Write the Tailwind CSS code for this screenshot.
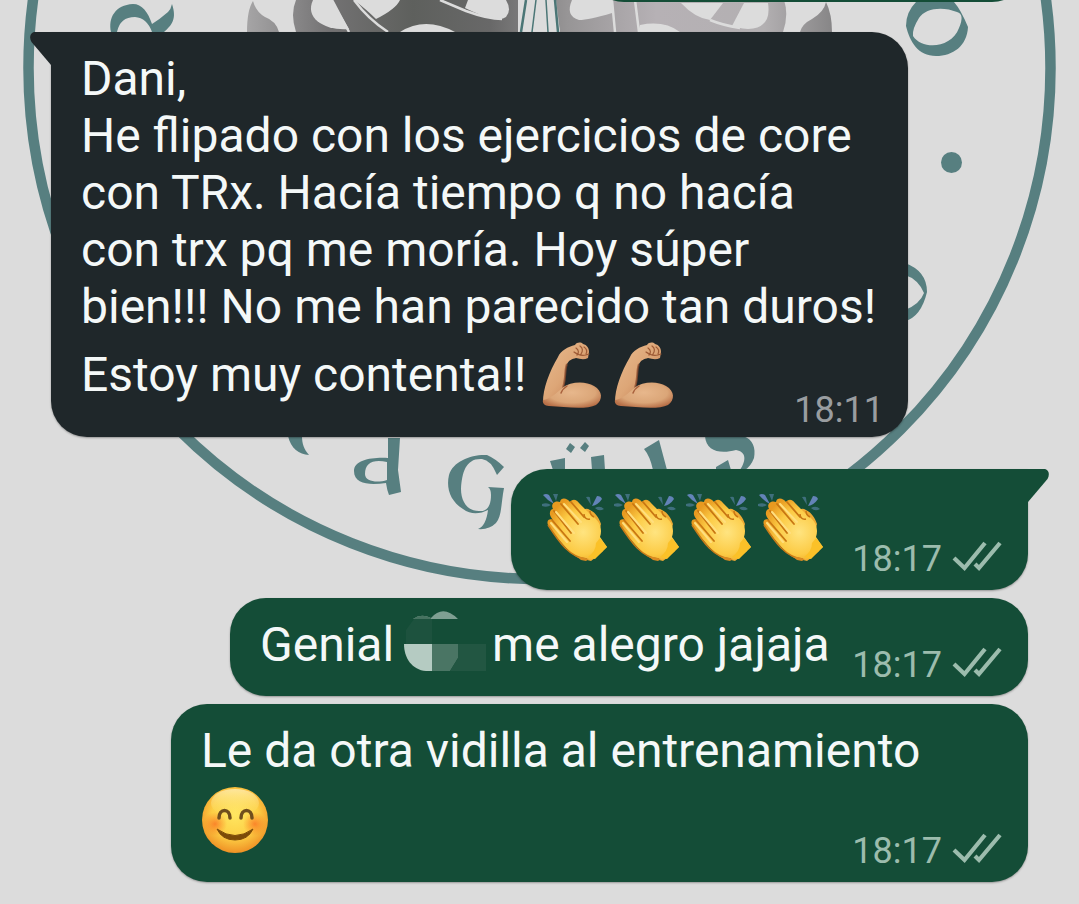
<!DOCTYPE html>
<html lang="es">
<head>
<meta charset="utf-8">
<meta name="viewport" content="width=device-width, initial-scale=1">
<title>Chat</title>
<script src="https://cdn.jsdelivr.net/npm/@tailwindcss/browser@4"></script>
</head>
<body class="relative min-h-screen overflow-x-hidden bg-[#dcdcdc] font-['Roboto',sans-serif]">

<!-- Shared drawings -->
<svg class="absolute size-0" aria-hidden="true">
  <defs>
    <linearGradient id="skin" x1="0" y1="0" x2="1" y2="1"><stop offset="0" stop-color="#e9bc90"/><stop offset=".5" stop-color="#dda677"/><stop offset="1" stop-color="#ba7045"/></linearGradient>
    <radialGradient id="bicep" cx=".5" cy=".4" r=".62"><stop offset="0" stop-color="#e7b78c"/><stop offset=".65" stop-color="#dba678"/><stop offset="1" stop-color="#b87048"/></radialGradient>
    <radialGradient id="palm" cx=".6" cy=".55" r=".6"><stop offset="0" stop-color="#ffe480"/><stop offset=".6" stop-color="#fccb45"/><stop offset="1" stop-color="#e89a20"/></radialGradient>
    <radialGradient id="face" cx=".5" cy=".42" r=".58"><stop offset="0" stop-color="#ffe660"/><stop offset=".6" stop-color="#fdcf45"/><stop offset="1" stop-color="#ef9125"/></radialGradient>
    <linearGradient id="shine" x1="0" y1="0" x2="0" y2="1"><stop offset="0" stop-color="#fff3c4" stop-opacity=".7"/><stop offset="1" stop-color="#ffe76e" stop-opacity="0"/></linearGradient>
    <radialGradient id="blush"><stop offset="0" stop-color="#f9651e" stop-opacity=".7"/><stop offset="1" stop-color="#f9751e" stop-opacity="0"/></radialGradient>
    <symbol id="arm" viewBox="0 0 72 72">
      <path d="M3 63C3 50 9 33 18 18C21 11 28 8 35 6C37 3 41 3 43 5C47 6 49 9 49 13L48 19C44 21 40 20 36 19C32 20 29 21 27 25C24 31 27 42 21 54Z" fill="url(#skin)"/>
      <path d="M27 25C24 31 27 42 21 54" fill="none" stroke="#8f4c2c" stroke-width="2" opacity=".7"/>
      <path d="M3 61C10 60 17 54 22 49C31 42 46 42 54 47C63 52 63 61 56 66C46 71 25 68 9 67C5 67 2 64 3 61Z" fill="url(#bicep)"/>
      <path d="M36 9C39 11 39 14 37 16M40 7C43 9 43 12 41 15M44 8C47 10 47 13 46 15M34 13C39 17 44 17 49 15" fill="none" stroke="#9e5b36" stroke-width="1.200" stroke-linecap="round"/>
      <path d="M21 54C22 51 24 49 27 47" fill="none" stroke="#a9623d" stroke-width="1.500" stroke-linecap="round"/>
    </symbol>
    <symbol id="clap" viewBox="0 0 72 72">
      <g fill="#6383b8"><path d="M4 2Q7 0 10 2L15 11Q9 8 4 2Z"/><path d="M53 13L58 3Q62 3 63 6Q59 12 53 13Z"/></g>
      <g fill="#3f6f7d"><path d="M14 1H19L17 8ZM3 11Q8 9 12 12Q8 15 3 13ZM47 4Q51 3 51 5L52 12ZM56 15Q61 12 65 16Q60 19 56 15Z"/></g>
      <path d="M44 24C43 17 46 14 51 17C57 20 60 25 62 31L57 50L64 58L52 68L44 66Z" fill="#edaa34"/>
      <path d="M14 16C11 10 17 7 21 9C22 4 28 5 31 9C34 5 38 7 40 10L53 23C60 27 64 35 61 44L68 54L55 66C47 68 38 66 30 58C22 50 15 41 9 32C7 27 11 25 14 27C8 20 12 16 14 16Z" fill="url(#palm)"/>
      <path d="M13 27L31 48M15 18L32 40M22 11L39 31M32 9L45 24" fill="none" stroke="#c87612" stroke-width="1.800" stroke-linecap="round"/>
      <path d="M12 30L28 49M17 19L35 40M25 11L42 29" fill="none" stroke="#ffdf7f" stroke-width="2" stroke-linecap="round"/>
      <path d="M9 32C20 49 31 65 48 66" fill="none" stroke="#c87b18" stroke-width="1.500"/>
      <path d="M38 64C41 63 47 66 50 66L47 68L42 67Z" fill="#d98b22"/>
      <path d="M61 45L68 54L56 66L49 64Q57 58 57 50Z" fill="#fbc128"/>
      <path d="M45 21C45 24 47 27 51 26M51 18C51 21 53 23 55 24" fill="none" stroke="#c87612" stroke-width="1.500"/>
    </symbol>
    <symbol id="smile" viewBox="0 0 68 68">
      <circle cx="34" cy="34" r="33" fill="url(#face)"/>
      <ellipse cx="34" cy="17" rx="24" ry="14" fill="url(#shine)"/>
      <circle cx="14" cy="38" r="12" fill="url(#blush)"/><circle cx="54" cy="38" r="12" fill="url(#blush)"/>
      <path d="M18 32C18 22 29 22 29 32M40 32C40 22 51 22 51 32" fill="none" stroke="#704e1d" stroke-width="3.500" stroke-linecap="round"/>
      <path d="M16 43Q34 56 52 43Q47 54 34 54Q21 54 16 43Z" fill="#7c4a08" stroke="#7c4a08" stroke-width="1" stroke-linejoin="round"/>
    </symbol>
    <symbol id="ticks" viewBox="0 0 50 32">
      <path d="M2 17L12.500 27L33 2M23 23L27 27L48 2" fill="none" stroke="#9cbcad" stroke-width="4.200"/>
    </symbol>
    <linearGradient id="tree" gradientUnits="userSpaceOnUse" x1="240" y1="0" x2="835" y2="0"><stop offset="0" stop-color="#aaa9aa"/><stop offset=".15" stop-color="#737273"/><stop offset=".29" stop-color="#5e605d"/><stop offset=".42" stop-color="#686868"/><stop offset=".55" stop-color="#979596"/><stop offset=".7" stop-color="#b6b1b5"/><stop offset=".88" stop-color="#b3b0b2"/><stop offset="1" stop-color="#858485"/></linearGradient>
  </defs>
</svg>

<!-- Wallpaper emblem -->
<svg class="absolute left-0 top-0 h-[904px] w-[1079px] max-w-none" viewBox="0 0 1079 904" aria-hidden="true">
  <circle cx="539.500" cy="68" r="511" fill="none" stroke="#577f80" stroke-width="10.500"/>
  <g fill="url(#tree)">
    <path d="M247 32Q247 10 253 1Q256 12 265 17Q276 21 279 32Z"/>
    <path d="M296 0H518V32H296Q290 14 296 0Z"/>
    <path d="M556 0H784Q789 15 783 32H560Z"/>
    <path d="M800 32Q802 24 812 19Q824 12 826 2Q832 14 832 32Z"/>
  </g>
  <g fill="#dcdcdc">
    <path d="M316 0H332L349 29C326 31 304 19 313 0Z"/>
    <path d="M354 0H400Q396 9 376 19Q367 10 354 0Z"/>
    <path d="M468 0H506Q512 10 506 17Q498 24 465 8Z"/>
    <path d="M400 32Q425 16 455 32Z"/>
    <path d="M523 0H554L560 32H518Z"/>
    <path d="M572 0H612V13Q589 20 579 20Q565 16 572 0Z"/>
    <path d="M640 25Q664 20 680 32H638Z"/>
    <path d="M681 3H723L710 20Q695 18 681 3Z"/>
    <path d="M744 3H768Q772 28 748 29Q737 28 732 26Z"/>
  </g>
  <path d="M332 0L349 32M354 0Q368 19 388 32M440 0L466 11Q488 19 502 19M612 0L615 32M635 0L639 32M710 20Q722 25 740 28" fill="none" stroke="#dcdcdc" stroke-width="2.500"/>
  <path d="M526 0L521 32M555 0L558 32" fill="none" stroke="#4b7676" stroke-width="2.500"/>
  <path d="M536 0L532 32M546 0L548 32" fill="none" stroke="#4b7676" stroke-width="1.500"/>
  <g fill="#577f80">
    <path d="M111 32C108 18 115 5 133 4C142 4 148 12 152 24Q160 19 168 12Q171 9 172 4C177 19 172 25 164 32H152Q147 18 135 17Q120 17 117 32Z"/>
    <path fill-rule="evenodd" d="M916 2H954Q961 10 968 27C967 46 953 56 936 56C918 56 910 42 906 26Q906 12 916 2ZM919 18Q912 29 913 36C922 50 951 49 959 28Q965 14 957 12C943 6 925 8 919 18Z"/>
    <circle cx="951.500" cy="162.500" r="10.500"/>
    <path d="M905 263Q927 271 927 292Q921 317 905 321V310Q920 304 924 293Q918 279 905 275Z"/>
    <path d="M288 436H302C302 444 304 449 309 455C299 454 291 449 288 436Z"/>
    <path fill-rule="evenodd" d="M388 438H400L398 470L401 492L389 495Q387 490 386 483C371 485 354 485 354 471C354 460 372 457 388 458ZM387 462C373 459 365 463 365 474C365 482 378 483 387 480Z"/>
    <path d="M504 467L497 475Q491 460 482 459C466 458 462 472 461 489C461 501 467 511 479 511C487 512 491 506 491 495Q491 489 488 487L504 488C501 503 502 516 496 523Q489 530 478 529Q486 526 488 510C480 514 471 515 463 509C450 501 446 488 449 475C453 461 472 454 487 455Q496 459 504 467Z"/>
    <path d="M570 443L575 447L571 453L566 449ZM585 442L589 446L585 452L580 448ZM550 461L565 458V470H553ZM591 457L604 455L605 470H592Z"/>
    <path d="M644 449L659 440L667 470H653Q650 456 644 449Z"/>
    <path d="M705 436H743C753 439 756 448 754 458Q751 466 745 470H740C746 461 747 452 736 450C721 454 706 452 705 436ZM716 467L728 460L731 470H716Z"/>
  </g>
</svg>

<main class="relative flex flex-col text-[48px] leading-[57px] text-[#f4f8f8]">
  <!-- Previous message, scrolled out at the top -->
  <div class="flex h-[2px] flex-col items-end justify-end pr-[51px]">
    <div class="h-24 w-[440px] shrink-0 rounded-[36px] bg-[#144d37]"></div>
  </div>

  <!-- Incoming -->
  <article class="relative mt-[30px] ml-[51px] grid w-[857px] max-w-full self-start rounded-[36px] rounded-tl-none bg-[#1f272a] shadow-[0_1px_2px_#00000050]">
    <svg class="absolute top-0 -left-[21px] h-[34px] w-[22px]" viewBox="0 0 22 34" aria-hidden="true"><path d="M22 0H5C0 0-1 6 1.500 10L21 33H22Z" fill="#1f272a"/></svg>
    <div class="pt-[18px] pb-[34px] pl-[30px] whitespace-nowrap [grid-area:1/1]">
      <p>Dani,<br>He flipado con los ejercicios de core<br>con TRx. Hacía tiempo q no hacía<br>con trx pq me moría. Hoy súper<br>bien!!! No me han parecido tan duros!</p>
      <p class="flex h-[68px] items-end">Estoy muy contenta!!
        <svg class="-mb-2 ml-[14px] size-[72px] shrink-0" role="img" aria-label="Bíceps"><use href="#arm"/></svg>
        <svg class="-mb-2 size-[72px] shrink-0" role="img" aria-label="Bíceps"><use href="#arm"/></svg>
      </p>
    </div>
    <time class="self-end justify-self-end pr-6 pb-[6px] text-[36px] leading-[42px] text-[#999da0] [grid-area:1/1]">18:11</time>
  </article>

  <!-- Outgoing -->
  <section class="mt-8 mr-[51px] flex flex-col items-end gap-2">
    <article class="relative grid w-[517px] rounded-[36px] rounded-tr-none bg-[#144d37] shadow-[0_1px_2px_#00000050]">
      <svg class="absolute top-0 -right-[21px] h-[34px] w-[22px]" viewBox="0 0 22 34" aria-hidden="true"><path d="M0 0H17C22 0 23 6 20.500 10L1 33H0Z" fill="#144d37"/></svg>
      <div class="flex h-[121px] pt-6 pl-7 [grid-area:1/1]">
        <svg class="size-[72px]" role="img" aria-label="Aplauso"><use href="#clap"/></svg>
        <svg class="size-[72px]" role="img" aria-label="Aplauso"><use href="#clap"/></svg>
        <svg class="size-[72px]" role="img" aria-label="Aplauso"><use href="#clap"/></svg>
        <svg class="size-[72px]" role="img" aria-label="Aplauso"><use href="#clap"/></svg>
      </div>
      <div class="flex items-start gap-[10px] self-end justify-self-end pr-[26px] pb-[10px] text-[36px] leading-[42px] text-[#9cbcad] [grid-area:1/1]"><time>18:17</time><svg class="mt-[3px] h-8 w-[50px]" role="img" aria-label="Entregado"><use href="#ticks"/></svg></div>
    </article>

    <article class="grid w-[798px] rounded-[36px] bg-[#144d37] shadow-[0_1px_2px_#00000050]">
      <p class="flex pt-[18px] pb-[23px] pl-[30px] whitespace-nowrap [grid-area:1/1]">Genial
        <svg class="-mt-[6px] -mb-[3px] ml-[10px] h-[66px] w-[84px]" viewBox="0 0 84 66" aria-label="Nombre oculto" role="img">
          <path d="M0 34H28V61H22C8 60 0 48 0 34Z" fill="#b5cbc2"/>
          <path d="M28 34H54V48L46 61H28Z" fill="#4a7564"/>
          <path d="M54 34H82V61H46L54 48Z" fill="#225642"/>
          <path d="M2 34V20L10 9H28V34Z" fill="#1d523e"/>
          <path d="M9 9Q17 3 27 8Q39-6 54 9Z" fill="#7f9f92"/>
          <path d="M9 9Q17 3 27 8V9Z" fill="#467260"/>
        </svg>
        <span class="ml-1">me alegro jajaja</span></p>
      <div class="flex items-start gap-[10px] self-end justify-self-end pr-[26px] pb-[10px] text-[36px] leading-[42px] text-[#9cbcad] [grid-area:1/1]"><time>18:17</time><svg class="mt-[3px] h-8 w-[50px]" role="img" aria-label="Entregado"><use href="#ticks"/></svg></div>
    </article>

    <article class="grid w-[857px] rounded-[36px] bg-[#144d37] shadow-[0_1px_2px_#00000050]">
      <div class="pt-[18px] pb-[28px] pl-[30px] whitespace-nowrap [grid-area:1/1]">
        <p>Le da otra vidilla al entrenamiento</p>
        <svg class="mt-[7px] size-[68px]" role="img" aria-label="Sonrisa"><use href="#smile"/></svg>
      </div>
      <div class="flex items-start gap-[10px] self-end justify-self-end pr-[26px] pb-[10px] text-[36px] leading-[42px] text-[#9cbcad] [grid-area:1/1]"><time>18:17</time><svg class="mt-[3px] h-8 w-[50px]" role="img" aria-label="Entregado"><use href="#ticks"/></svg></div>
    </article>
  </section>
</main>
</body>
</html>
